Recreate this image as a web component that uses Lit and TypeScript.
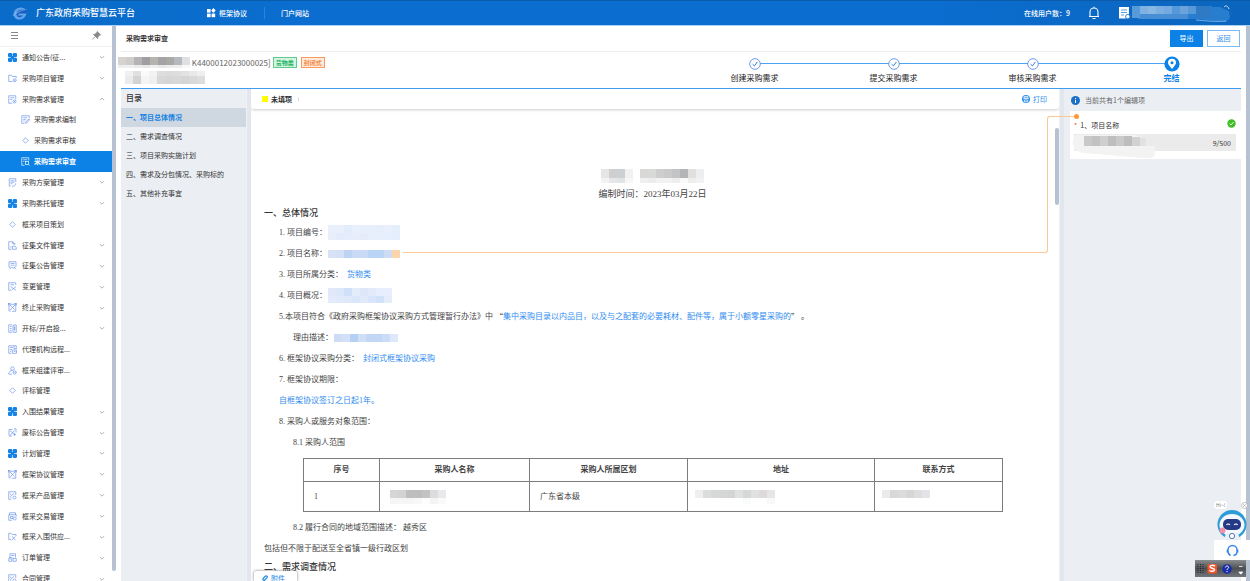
import { LitElement, html, svg, css, nothing } from "lit";
import { customElement, property, state } from "lit/decorators.js";
import { classMap } from "lit/directives/class-map.js";

type Fold = "down" | "up" | "none";
interface MenuItem {
  icon: string;
  text: string;
  fold: Fold;
  sub?: boolean;
}

const MENU: MenuItem[] = [
  { icon: "grid", text: "通知公告(征...", fold: "down" },
  { icon: "folder", text: "采购项目管理", fold: "down" },
  { icon: "doc", text: "采购需求管理", fold: "up" },
  { icon: "edit", text: "采购需求编制", fold: "none", sub: true },
  { icon: "diamond", text: "采购需求审核", fold: "none", sub: true },
  { icon: "search", text: "采购需求审查", fold: "none", sub: true },
  { icon: "plan", text: "采购方案管理", fold: "down" },
  { icon: "grid", text: "采购委托管理", fold: "down" },
  { icon: "diamond", text: "框采项目策划", fold: "none" },
  { icon: "file", text: "征集文件管理", fold: "down" },
  { icon: "notice", text: "征集公告管理", fold: "down" },
  { icon: "change", text: "变更管理", fold: "down" },
  { icon: "flow", text: "终止采购管理", fold: "down" },
  { icon: "open", text: "开标/开启投...", fold: "down" },
  { icon: "agency", text: "代理机构远程...", fold: "none" },
  { icon: "user", text: "框采组建评审...", fold: "none" },
  { icon: "diamond", text: "评标管理", fold: "none" },
  { icon: "grid", text: "入围结果管理", fold: "down" },
  { icon: "bid", text: "废标公告管理", fold: "down" },
  { icon: "grid", text: "计划管理", fold: "down" },
  { icon: "flow", text: "框架协议管理", fold: "down" },
  { icon: "product", text: "框采产品管理", fold: "down" },
  { icon: "trade", text: "框采交易管理", fold: "down" },
  { icon: "supply", text: "框采入围供应...", fold: "down" },
  { icon: "order", text: "订单管理", fold: "down" },
  { icon: "product", text: "合同管理", fold: "down" },
];

const TOC = [
  "一、项目总体情况",
  "二、需求调查情况",
  "三、项目采购实施计划",
  "四、需求及分包情况、采购标的",
  "五、其他补充事宜",
];

const STEPS = ["创建采购需求", "提交采购需求", "审核采购需求", "完结"];

const ICONS: Record<string, unknown> = {
  grid: svg`<g fill="#1583e6" stroke="none"><rect x="0" y="0" width="8.5" height="8.5" rx="2.500"/><rect x="9.5" y="0" width="8.5" height="8.5" rx="2.500"/><rect x="0" y="9.5" width="8.5" height="8.5" rx="2.500"/><rect x="9.5" y="9.5" width="8.5" height="8.5" rx="2.500"/><rect x="6" y="6" width="6" height="6"/></g>`,
  folder: svg`<path d="M9 15H1.500V2.500H7L9 5h7.500v3"/><circle cx="13.500" cy="12.500" r="3"/><circle cx="13.500" cy="12.500" r=".6"/>`,
  doc: svg`<path d="M8 16.500H1.500v-15h14V9M4.500 5.500h8M4.500 9h4"/><circle cx="13" cy="13" r="3"/><path d="M13 12v2"/>`,
  edit: svg`<path d="M7 16.500H1.500v-15h15V6M4.500 5.500h8M4.500 9h5M4.500 12h3M9 16.500l1-3.500 6-5 1.500 2-6 5.500z"/>`,
  diamond: svg`<path d="M9 3.500L14.500 9 9 14.500 3.500 9z"/>`,
  search: svg`<path d="M7 16.500H1.500v-15h14V7M4.500 5.500h8M4.500 9h2"/><rect x="9" y="9" width="6" height="6"/><path d="M15 15l2.500 2"/>`,
  plan: svg`<path d="M5 16.500H2.500v-15h13V8M5 5.500h8M5 8.500h8M5 11.500h4M8 16.500c5 0 7-1 7.500-6"/>`,
  file: svg`<path d="M7 16.500H1.500v-15h8l4 4V8M9.500 1.500v4h4M4 12h3"/><path d="M9 16.500v-6h5l2.500 2v4z"/>`,
  notice: svg`<path d="M5 12.500H2v-11h14v10M5 5h8M5 8.500h8M3 16.500l4-4 3 2 5-3M12 12l4 4.500"/>`,
  change: svg`<path d="M6 16.500H1.500v-15h14V6M5 5.500h7M5 9l11 7.500M16 9L7 16.500"/>`,
  flow: svg`<path d="M2 16V5M5 2.500h8M15.500 5v11M2 16h3M4 4l9 9M14 4L4 14M8 16.500h8"/><rect x="1" y="1" width="3" height="3"/><rect x="14" y="1" width="3" height="3"/>`,
  open: svg`<path d="M8 16.500H1.500v-15H8M4 5h3M4 9h3M4 13h3M10 2h6.500v14.500H10zM11 6h4M11 10h4M13 6v7"/>`,
  agency: svg`<path d="M7 16.500H1.500v-15h15V8M4 5h6M4 9h4M4 12.500h3M12 1.500v6h4.500"/><rect x="9.500" y="10" width="7.500" height="6.500"/><path d="M12 13h3"/>`,
  user: svg`<circle cx="9" cy="5" r="3.500"/><path d="M1 16.500c1-5 4-8 8-8M2 16.500h6"/><circle cx="13.500" cy="13" r="3.200"/><path d="M12 13l1.200 1.200 2-2.200"/>`,
  bid: svg`<path d="M2 15V3M2 3h7M12 1.500h4V9M4 5.500l8 6M13 5L4 15M2 16h6M11 13h5M13 10v6"/>`,
  product: svg`<path d="M7 16.500H1.500v-15h14V8M4 5l3 4 5-4M4 12h3"/><circle cx="13" cy="13" r="3"/>`,
  trade: svg`<path d="M3 6V1.500h12V6M1.500 16.500V5.500h15V9M1.500 16.500H8M5 9h5v4H5z"/><circle cx="13.500" cy="13" r="3"/>`,
  supply: svg`<path d="M6 15H1.500V2.500H6l2 2.500h8v3M8 8.500l7 8M15 9l-8 7.500"/>`,
  order: svg`<path d="M4 9V1.500h11V9M6.500 5h6M1.500 16.500v-5h6v5zM10 9v7.500h6.500V11H10M1.500 9h6"/>`,
};

/* Redacted text: coarse colour cells on a regular raster. */
const mosaic = (rows: string[][], cw: number, rh: number[], label: string) => {
  const w = Math.max(...rows.map((r) => r.length)) * cw;
  const h = rh.reduce((a, b) => a + b, 0);
  let y = 0;
  const out = rows.map((row, i) => {
    const top = y;
    y += rh[i];
    return row.map((c, j) =>
      c ? svg`<rect x=${j * cw} y=${top} width=${cw} height=${rh[i]} fill=${"#" + c}></rect>` : nothing
    );
  });
  return html`<svg class="mosaic" role="img" aria-label=${label} width=${w} height=${h} viewBox="0 0 ${w} ${h}" shape-rendering="crispEdges">${out}</svg>`;
};

const chevron = (up: boolean) => html`<svg class="chev" viewBox="0 0 10 10" aria-hidden="true"><path d=${up ? "M1.500 7L5 3.500 8.500 7" : "M1.500 3.500L5 7l3.500-3.500"} fill="none" stroke="#a4a8ae" stroke-width="1.500"/></svg>`;

@customElement("side-menu")
class SideMenu extends LitElement {
  @state() current = "采购需求审查";

  static styles = css`
    :host { display: flex; flex: none; width: 116px; min-height: 0; background: #fff; overflow: hidden; }
    .inner { flex: 1; min-width: 0; display: flex; flex-direction: column; }
    .tools { flex: none; height: 21px; display: flex; justify-content: space-between; align-items: center; padding: 0 11px 2px 10px; border-bottom: 1px solid #eef0f2; box-sizing: border-box; }
    .tools button { border: 0; background: none; padding: 0; height: 9px; display: flex; }
    .tools svg { width: 9px; height: 9px; }
    ul { list-style: none; margin: 0 0 -8px; padding: 0; flex: 1; display: grid; grid-auto-rows: 1fr; }
    li { display: flex; min-height: 0; }
    .item { flex: 1; min-width: 0; display: flex; align-items: center; gap: 5px; padding: 0 7px 0 8px; border: 0; background: none; color: #333; text-decoration: none; font: 7px/9px "Noto Sans CJK SC", sans-serif; text-align: left; white-space: nowrap; }
    .item span { flex: 1; }
    .sub { padding-left: 21px; gap: 4px; }
    .on { background: #0c82e6; color: #fff; font-weight: 700; }
    .ico { width: 9px; height: 9px; flex: none; fill: none; stroke: #6f95ec; stroke-width: 1.4; }
    .on .ico { stroke: #fff; }
    .chev { width: 6px; height: 6px; flex: none; }
    .bar { flex: none; width: 4px; margin-bottom: 10px; background: #b6c1d1; border-radius: 0 0 2px 2px; }
  `;

  render() {
    return html`
      <div class="inner">
        <div class="tools">
          <button aria-label="折叠菜单"><svg viewBox="0 0 9 9"><path d="M1 1.500h7M1 4.500h7M1 7.500h7" stroke="#888" stroke-width="1.200"/></svg></button>
          <button aria-label="固定菜单"><svg viewBox="0 0 9 9"><path d="M5.200.5l3.300 3.300-1 .5-1.500 1.500-.4 1.800L1.500 3.500l1.800-.4L4.800 1.500zM3 5.500L.5 8.500" fill="#8a8a8a" stroke="#8a8a8a" stroke-width=".8"/></svg></button>
        </div>
        <ul>
          ${MENU.map((m) => {
            const on = m.text === this.current;
            const cls = classMap({ item: true, sub: !!m.sub, on });
            const ico = html`<svg class="ico" viewBox="0 0 18 18" aria-hidden="true">${ICONS[m.icon]}</svg>`;
            return html`<li>${m.fold === "none"
              ? html`<a class=${cls} href="#" @click=${() => (this.current = m.text)}>${ico}<span>${m.text}</span></a>`
              : html`<button class=${cls} aria-expanded=${m.fold === "up"}>${ico}<span>${m.text}</span>${chevron(m.fold === "up")}</button>`}</li>`;
          })}
        </ul>
      </div>
      <div class="bar"></div>
    `;
  }
}

@customElement("step-line")
class StepLine extends LitElement {
  @property({ type: Array }) steps: string[] = [];

  static styles = css`
    :host { display: block; }
    ol { list-style: none; margin: 0; padding: 3px 0 0; display: grid; grid-template-columns: repeat(4, 139px); }
    li { position: relative; display: flex; flex-direction: column; align-items: center; font-size: 8px; line-height: 12px; color: #222; }
    .mark { height: 17px; display: flex; align-items: center; position: relative; }
    .mark svg { width: 12px; height: 12px; }
    .last .mark svg { width: 16px; height: 16px; }
    li:not(.last)::before { content: ""; position: absolute; top: 8px; left: 50%; width: 100%; height: 1px; background: #4aa3f3; }
    .last { color: #0c82e6; font-weight: 700; }
  `;

  render() {
    const n = this.steps.length - 1;
    return html`<ol>${this.steps.map((s, i) => html`
      <li class=${i === n ? "last" : ""}>
        <span class="mark">${i === n
          ? html`<svg viewBox="0 0 16 16"><circle cx="8" cy="8" r="7.600" fill="#0c82e6"/><path d="M8 13C5.500 10 4 8.500 4 6.800a4 4 0 018 0C12 8.500 10.500 10 8 13z" fill="#fff"/><circle cx="8" cy="6.800" r="1.500" fill="#0c82e6"/></svg>`
          : html`<svg viewBox="0 0 12 12"><circle cx="6" cy="6" r="5.300" fill="#fff" stroke="#5b8fe8" stroke-width=".9"/><path d="M3.600 6.200l1.800 1.700 3-4" fill="none" stroke="#3a78e0" stroke-width="1"/></svg>`}</span>
        <span>${s}</span>
      </li>`)}</ol>`;
  }
}

@customElement("requirement-doc")
class RequirementDoc extends LitElement {
  static styles = css`
    :host { display: block; color: #444; font: 8px/21px "Liberation Serif", "Noto Sans CJK SC", serif; }
    p, h2, h3 { margin: 0; }
    .mosaic { display: block; flex: none; }
    .title { display: flex; justify-content: center; gap: 7px; padding: 60px 6px 0 0; height: 14px; }
    .date { text-align: center; font-size: 9px; line-height: 22px; padding-right: 5px; }
    h3 { font-size: 9px; line-height: 17px; font-weight: 500; color: #333; padding-left: 13px; }
    .row { display: flex; align-items: center; height: 21px; padding-left: 28px; white-space: nowrap; }
    .deep { padding-left: 42px; }
    .flush { padding-left: 13px; }
    .blue { color: #2f8cf0; }
    .cjk { font-family: "Noto Sans CJK SC", sans-serif; }
    .gap { gap: 1px; }
    table { border-collapse: collapse; table-layout: fixed; width: calc(100% - 108px); margin: 5px 0 5px 52px; line-height: 12px; }
    th, td { border: 1px solid #7c7c7c; padding: 0 10px; box-sizing: border-box; text-align: left; }
    td:nth-child(4), td:nth-child(5) { padding-left: 7px; }
    th { height: 23px; text-align: center; font-weight: 600; color: #444; }
    td { height: 30px; }
    .w1 { width: 76px; } .w2 { width: 150px; } .w3 { width: 158px; } .w4 { width: 187px; }
  `;

  render() {
    return html`
      <div class="title">
        ${mosaic([["e6e6e6", "cfcfcf", "cdd0d2", "f1f1f1"], ["f3f3f3", "e6e6e6", "e2e3e4", "f6f6f6"]], 8, [9, 5], "已隐去")}
        ${mosaic([["dad7d7", "d8dad8", "cecece", "cacaca", "c3c4c6", "b5b5b6", "e2e0de", "eceeef"], ["efefef", "ededed", "f2f2f2", "f3f3f3", "eeeeee", "fafafa", "eeeeec", "f2f2f2"]], 8, [9, 5], "已隐去")}
      </div>
      <p class="date">编制时间：2023年03月22日</p>
      <h3>一、总体情况</h3>
      <p class="row gap">1. 项目编号：${mosaic([["e9effb", "e9effb", "e3ecfa", "e8f0fb", "e8effc", "e8eefb", "e6eefb", "e9f0fc", "e5effc"], ["e8effb", "e2ecfa", "e6eefb", "e7eefa", "e4ecfa", "e7effb", "e7eefc", "e6effc", "e3edfb"]], 8, [8, 7], "已隐去")}</p>
      <p class="row gap">2. 项目名称：${mosaic([["d8e2f6", "d3e0f5", "bcd3f4", "c8daf5", "c8daf5", "b9d4f5", "b8d4f6", "cddcf4", "fcd4ab"]], 8, [8], "已隐去")}</p>
      <p class="row">3. 项目所属分类：<span class="blue">&nbsp; 货物类</span></p>
      <p class="row gap">4. 项目概况：${mosaic([["e0e8f9", "dce7f9", "cfe0f8", "e3ecfb", "dce8fa", "e2ebfa", "e8effc", "e8eefb"], ["e4ecfb", "e0eafa", "dfe9fa", "dae6f9", "e0eafa", "d8e5fa", "d2e2f8", "e5edfb"]], 8, [8, 7], "已隐去")}</p>
      <p class="row">5.本项目符合《政府采购框架协议采购方式管理暂行办法》中&nbsp;<span class="cjk">“</span><span class="blue">集中采购目录以内品目，以及与之配套的必要耗材、配件等，属于小额零星采购的</span><span class="cjk">”</span>&nbsp;。</p>
      <p class="row deep gap">理由描述：${mosaic([["cfdcf5", "d3e0f7", "b4d0f5", "cfdff6", "c2d7f5", "c2d7f5", "cbdcf6", "dde8fa"]], 8, [8], "已隐去")}</p>
      <p class="row">6. 框架协议采购分类：<span class="blue">&nbsp; 封闭式框架协议采购</span></p>
      <p class="row">7. 框架协议期限：</p>
      <p class="row blue">自框架协议签订之日起1年。</p>
      <p class="row">8. 采购人或服务对象范围：</p>
      <p class="row deep">8.1 采购人范围</p>
      <table>
        <colgroup><col class="w1"><col class="w2"><col class="w3"><col class="w4"><col></colgroup>
        <thead><tr><th>序号</th><th>采购人名称</th><th>采购人所属区划</th><th>地址</th><th>联系方式</th></tr></thead>
        <tbody><tr>
          <td>1</td>
          <td>${mosaic([["d6d6d6", "d3d3d3", "bebebe", "bebebe", "c3c3c3", "dcdce0", "e9e9eb"], ["f6f6f6", "f6f6f6", "f6f6f6", "f8f8f8", "fdfdfd", "f4f4f4", "f9f9f9"]], 8, [8, 6], "已隐去")}</td>
          <td>广东省本级</td>
          <td>${mosaic([["efefef", "dadedc", "d7d9d8", "d5d7d6", "d3d5d4", "e0e1e1", "d4d8d6", "e0e1e0", "dedadb", "e6e6e8"], ["", "", "", "", "", "", "fafcfc", "", "", "f7f9f9"]], 8, [8, 6], "已隐去")}</td>
          <td>${mosaic([["ebebeb", "d8d8d8", "dbdbdb", "d6d6d6", "dedede", "e4e4e8"], ["", "", "", "", "", ""]], 8, [8, 6], "已隐去")}</td>
        </tr></tbody>
      </table>
      <p class="row deep">8.2 履行合同的地域范围描述：&nbsp;越秀区</p>
      <p class="row flush">包括但不限于配送至全省镇一级行政区划</p>
      <h3>二、需求调查情况</h3>
    `;
  }
}

@customElement("app-root")
class AppRoot extends LitElement {
  @state() section = 0;

  static styles = css`
    :host { display: flex; flex-direction: column; height: 100vh; overflow: hidden; background: #fff; color: #333; font: 7px/12px "Noto Sans CJK SC", sans-serif; position: relative; }
    a { color: inherit; text-decoration: none; }
    button { font: inherit; }
    .mosaic { display: block; }
    .top { flex: none; height: 26px; box-sizing: border-box; display: flex; align-items: center; color: #fff; background: linear-gradient(90deg, #0a6cc8, #0b6dcf 25%, #0b6dcf 75%, #0b65bd); border-top: 1px solid #0b5ba8; border-bottom: 1px solid #a9cff3; padding: 0 20px 0 12px; }
    .logo { width: 17px; height: 15px; margin-right: 7px; }
    h1 { margin: 0; width: 170px; font-size: 9px; line-height: 14px; font-weight: 500; }
    .nav { display: flex; align-items: center; flex: 1; }
    .nav a { display: flex; align-items: center; gap: 3px; font-weight: 500; }
    .nav svg { width: 10px; height: 10px; }
    .sep { width: 1px; height: 12px; background: #2b83dc; margin: 0 16px 0 17px; }
    .online { font-weight: 500; margin-right: 17px; }
    .bell { width: 14px; height: 14px; margin-right: 17px; }
    .note { width: 13px; height: 14px; margin-right: 1px; }
    .who { display: flex; width: 98px; opacity: 0.8; }
    .body { flex: 1; min-height: 0; display: flex; }
    main { flex: 1; min-width: 0; margin: 0 5px; display: flex; flex-direction: column; }
    .pagebar { flex: none; height: 26px; box-sizing: border-box; display: flex; align-items: center; gap: 4px; padding: 0 1px 1px 5px; border-bottom: 1px solid #ececec; }
    h2 { margin: 0; flex: 1; font-size: 7px; line-height: 12px; font-weight: 600; }
    .btn { width: 33px; height: 17px; padding: 0; border: 1px solid #0c82e6; background: #0c82e6; color: #fff; font-size: 7px; line-height: 12px; }
    .ghost { background: #fff; color: #2f8cea; border-color: #7cbcf6; }
    .info { flex: none; height: 37px; box-sizing: border-box; display: flex; justify-content: space-between; border-bottom: 1px solid #3e9df3; background: #fff; }
    .proj { padding-top: 4px; margin-left: -3px; }
    .line { display: flex; align-items: center; height: 13px; font-size: 8px; color: #666; }
    .tag { font-size: 6px; line-height: 9px; font-weight: 700; padding: 0 2px; border: 1px solid; margin-left: 2px; }
    .green { color: #28b765; border-color: #62c98e; background: #d5f5e2; }
    .orange { color: #f58a44; border-color: #f79a5c; background: #fdebdd; margin-left: 4px; }
    .second { padding: 2px 0 0 7px; }
    .work { flex: 1; min-height: 0; display: flex; position: relative; }
    .toc { flex: none; width: 125px; background: #ebeff3; }
    .toc h3 { margin: 0; padding-left: 5px; font-size: 8px; line-height: 18px; height: 19px; font-weight: 500; }
    .toc a { display: block; padding-left: 5px; height: 19px; line-height: 18px; white-space: nowrap; }
    .toc .on { background: #cfd7e0; color: #1583e6; font-weight: 700; }
    .split { flex: none; width: 5px; background: #e1e7ed; border-left: 1px solid #eff2f5; box-sizing: border-box; }
    .doc { flex: 1; min-width: 0; overflow: hidden; position: relative; background: #fff; }
    .legend { height: 20px; display: flex; align-items: center; padding: 0 12px 0 11px; font-weight: 600; box-shadow: 0 1px 3px #ccc; border-radius: 0 0 3px 3px; }
    .dot { width: 6px; height: 6px; background: #ff0; margin-right: 3px; }
    .tick { width: 1px; height: 4px; background: #ddd; margin-left: 6px; }
    .print { margin-left: auto; padding: 0; border: 0; background: none; display: flex; align-items: center; gap: 3px; color: #1e88ea; font-weight: 400; }
    .print svg { width: 8px; height: 8px; }
    .thumb { position: absolute; right: 0; top: 39px; width: 4px; height: 77px; border-radius: 2px; background: #b6c1d1; }
    .attach { position: absolute; left: 3px; bottom: 0; width: 43px; height: 10px; padding: 3px 0 0 8px; border: 0; box-sizing: border-box; display: flex; align-items: center; gap: 3px; background: #fff; color: #1e88ea; font-size: 7px; box-shadow: 0 0 3px #777; border-radius: 2px 2px 0 0; overflow: hidden; }
    .attach svg { width: 6px; height: 6px; }
    .wire-a { position: absolute; left: 282px; right: 193px; top: 34px; height: 130px; border: solid #fbc995; border-width: 0 1px 1px 0; border-radius: 0 0 3px 0; box-sizing: border-box; }
    .wire-b { position: absolute; right: 165px; width: 29px; top: 27px; height: 8px; border: solid #fbc995; border-width: 1px 0 0 1px; border-radius: 3px 0 0 0; box-sizing: border-box; }
    .wire-dot { position: absolute; right: 162px; top: 25px; width: 5px; height: 5px; border-radius: 50%; background: #fb9a38; }
    .side { flex: none; width: 177px; background: #ebeff3; }
    .count { height: 22px; display: flex; align-items: center; gap: 5px; padding-left: 7px; color: #666; }
    .count svg { width: 9px; height: 9px; }
    .card { margin-left: 6px; background: #fff; height: 48px; padding: 7px 5px 0 4px; box-sizing: border-box; }
    .field { display: flex; align-items: center; height: 14px; }
    .field label { flex: 1; }
    .star { color: #f44; margin-right: 3px; }
    .ok { width: 9px; height: 9px; margin: -4px 0 0; }
    .box { position: relative; margin-top: 2px; height: 17px; display: flex; align-items: center; background: #ebebeb; padding-right: 5px; }
    .box input { flex: 1; min-width: 0; height: 17px; border: 0; padding: 0 4px; background: none; font: inherit; box-sizing: border-box; }
    .blob { position: absolute; left: -2px; top: 0; }
    .rail { flex: none; width: 4px; background: #b6c1d1; }
    .help { position: absolute; right: 0; bottom: 4px; width: 55px; display: flex; flex-direction: column; align-items: flex-end; }
    .bubble { display: flex; justify-content: space-between; align-items: center; width: 34px; height: 8px; margin-right: 2px; }
    .bubble span { background: #fff; color: #777; font-size: 5px; line-height: 8px; border-radius: 4px; padding: 0 2px; }
    .bubble svg { width: 7px; height: 7px; }
    .robot { width: 30px; height: 31px; margin-right: 3px; }
    .head { width: 36px; height: 20px; padding: 0 0 0 5px; border: 0; box-sizing: border-box; background: #fff; display: flex; align-items: center; justify-content: center; }
    .head svg { width: 13px; height: 13px; margin-right: 5px; }
    .ime { display: block; width: 51px; height: 17px; margin-right: 4px; }
  `;

  render() {
    return html`
      <header class="top">
        <svg class="logo" viewBox="0 0 34 30"><ellipse cx="16" cy="15" rx="13" ry="12" fill="#1c5fc0"/><path d="M28 8C24 1 11 1 6 8s-3 17 6 19c9 1 15-4 17-12H15l-4 4h11c-3 4-9 5-12 1-3-5 0-11 6-12 4-1 8 0 12 0z" fill="#5ea5ec"/><path d="M1 19c3-6 15-12 31-12-10 2-22 6-28 13z" fill="#8cc2f8" opacity=".5"/></svg>
        <h1>广东政府采购智慧云平台</h1>
        <nav class="nav">
          <a href="#"><svg viewBox="0 0 10 10" fill="#fff"><rect x="1" y="1" width="3.600" height="3.600"/><rect x="1" y="5.600" width="3.600" height="3.600"/><rect x="5.600" y="5.600" width="3.600" height="3.600"/><path d="M7.400 0l2.300 2.600-2.300 2.400-2.200-2.400z"/></svg>框架协议</a>
          <span class="sep"></span>
          <a href="#">门户网站</a>
        </nav>
        <span class="online">在线用户数：9</span>
        <svg class="bell" viewBox="0 0 14 14" fill="none" stroke="#fff" stroke-width="1.100"><path d="M2 10.500h10M3 10.500V6a4 4 0 018 0v4.500M5.500 12.500h3M7 .8v1.200"/></svg>
        <svg class="note" viewBox="0 0 13 14"><path d="M1 1h10v11.500H1z" fill="#fff"/><path d="M3 4h6M3 6.500h6M3 9h3" stroke="#5c9fe0"/><circle cx="9.800" cy="10.600" r="2.200" fill="#fff" stroke="#2f7fd0"/></svg>
        <div class="who">
          <svg width="98" height="18" viewBox="0 0 98 18" role="img" aria-label="用户信息已隐去">
            <path d="M4 3h84l9 4 1 7-4 4-30-3H6L0 10z" fill="#2f83d2"/>
            <g shape-rendering="crispEdges"><rect x="0" y="2" width="8" height="12" fill="#6ba7e0"/><rect x="8" y="2" width="8" height="8" fill="#9cc4ea"/><rect x="16" y="2" width="8" height="8" fill="#a9ccec"/><rect x="24" y="2" width="8" height="8" fill="#98c1e9"/><rect x="32" y="2" width="8" height="8" fill="#8dbbe7"/><rect x="40" y="2" width="8" height="8" fill="#69a5de"/><rect x="48" y="2" width="8" height="8" fill="#82b3e3"/><rect x="56" y="2" width="8" height="8" fill="#6aa5dd"/><rect x="64" y="2" width="16" height="12" fill="#377fc6"/><rect x="8" y="10" width="48" height="5" fill="#5698da"/></g>
            <path d="M64 16c12 1 20 2 30 1" stroke="#8cc0f0" fill="none"/><path d="M92 3c2-2 4-1 5 2" stroke="#fff" fill="none"/>
          </svg>
        </div>
      </header>
      <div class="body">
        <side-menu></side-menu>
        <main>
          <div class="pagebar">
            <h2>采购需求审查</h2>
            <button class="btn">导出</button>
            <button class="btn ghost">返回</button>
          </div>
          <div class="info">
            <div class="proj">
              <div class="line">
                ${mosaic([["d5d2d2", "cfcccc", "b5b3b4", "9f9fa1", "b6b4b1", "a5a3a3", "a9a9a8", "b6babf", "dfe0e2"], ["eeeeee", "f0f0f0", "ebebeb", "e8e8e8", "eeeeee", "e9e9e9", "ededed", "efefef", "f8f8f8"]], 8, [8, 3], "项目名称已隐去")}
                <span>&nbsp;K4400012023000025]</span>
                <span class="tag green">货物类</span>
                <span class="tag orange">封闭式</span>
              </div>
              <div class="second">${mosaic([["f0f0f0", "e0e0e0", "fafafa", "f2f2f2", "dedede", "dcdcdc", "dddddd", "e2e2e2", "e8e8e8", "efefef"], ["ebebeb", "d3d3d3", "f5f5f5", "f0f0f0", "d8d8d8", "d6d6d6", "d8d8d8", "d5d5d5", "d9d9d9", "dddddd"]], 8, [5, 8], "采购单位已隐去")}</div>
            </div>
            <step-line .steps=${STEPS}></step-line>
          </div>
          <div class="work">
            <nav class="toc">
              <h3>目录</h3>
              ${TOC.map((t, i) => html`<a href="#" class=${classMap({ on: i === this.section })} @click=${() => (this.section = i)}>${t}</a>`)}
            </nav>
            <div class="split"></div>
            <section class="doc">
              <div class="legend">
                <span class="dot"></span>未填项<span class="tick"></span>
                <button class="print"><svg viewBox="0 0 8 8"><circle cx="4" cy="4" r="4" fill="#2b8fe8"/><path d="M2 3h4V1.500H2zM1.300 3.500h5.400M2.300 5h3.400v1.700H2.300z" fill="none" stroke="#fff" stroke-width=".7"/></svg>打印</button>
              </div>
              <requirement-doc></requirement-doc>
              <div class="thumb"></div>
              <button class="attach"><svg viewBox="0 0 6 6"><path d="M1 3.500L3.500 1a1.200 1.200 0 011.600 1.700L2.700 5A1 1 0 011.200 3.600" fill="none" stroke="#1e88ea" stroke-width="1.200"/></svg>附件</button>
            </section>
            <div class="split"></div>
            <aside class="side">
              <div class="count"><svg viewBox="0 0 9 9"><circle cx="4.500" cy="4.500" r="4.500" fill="#1a70c6"/><path d="M4.500 2v1M4.500 3.800V7" stroke="#fff"/></svg>当前共有1个编辑项</div>
              <div class="card">
                <div class="field">
                  <label for="pname"><span class="star">*</span>1、项目名称</label>
                  <svg class="ok" viewBox="0 0 9 9"><circle cx="4.500" cy="4.500" r="4.200" fill="#43bf26"/><path d="M2.600 4.600l1.400 1.300 2.500-2.700" fill="none" stroke="#fff"/></svg>
                </div>
                <div class="box">
                  <input id="pname" type="text" readonly>
                  <svg class="blob" width="84" height="26" viewBox="0 0 84 26" aria-hidden="true"><path d="M4 1h60l10 5v6h9v7c0 5-6 6-12 5L12 19C0 18-2 6 4 1z" fill="#f3f3f3"/><g shape-rendering="crispEdges"><rect x="12" y="2" width="8" height="10" fill="#c9c9c9"/><rect x="20" y="2" width="8" height="10" fill="#c2c2c2"/><rect x="28" y="2" width="8" height="10" fill="#cfcfcf"/><rect x="36" y="2" width="8" height="10" fill="#bebebe"/><rect x="44" y="2" width="8" height="10" fill="#c8cac8"/><rect x="52" y="2" width="8" height="10" fill="#bdbdbd"/><rect x="60" y="3" width="8" height="9" fill="#d2d2d2"/><rect x="68" y="4" width="6" height="8" fill="#e2e2e2"/></g></svg>
                  <span>9/500</span>
                </div>
              </div>
            </aside>
            <div class="wire-a"></div><div class="wire-b"></div><div class="wire-dot"></div>
          </div>
        </main>
        <div class="rail"></div>
      </div>
      <div class="help">
        <div class="bubble"><span>Hi~!</span><svg viewBox="0 0 7 7"><circle cx="3.500" cy="3.500" r="3" fill="#fff" stroke="#aaa" stroke-width=".7"/><path d="M2.300 2.300l2.400 2.400M4.700 2.300L2.300 4.700" stroke="#999" stroke-width=".6"/></svg></div>
        <svg class="robot" viewBox="0 0 30 31"><circle cx="15" cy="15.500" r="14.500" fill="#2d9bd6"/><ellipse cx="15" cy="16" rx="12.500" ry="11" fill="#f4f8fc"/><rect x="6" y="10" width="18" height="11" rx="5" fill="#253a86"/><path d="M9.500 16c.8-1.400 2.600-1.400 3.400 0M17.200 16c.8-1.400 2.600-1.400 3.400 0" stroke="#fff" fill="none" stroke-width="1.100"/><path d="M9 24h12l2 7H7z" fill="#e9eff6"/><circle cx="15" cy="27" r="2.600" fill="#fff" stroke="#5b6fb0"/><circle cx="5.500" cy="21.500" r="3" fill="#f08fae"/></svg>
        <button class="head" aria-label="在线客服"><svg viewBox="0 0 13 13" fill="none" stroke="#3a86ea" stroke-width="1.500"><path d="M4.500 11.500A5 5 0 012 7V6a4.500 4.500 0 019 0v1.500c0 2-1 3.500-3.500 4M11.600 5.500v3M1.400 5.500v3"/></svg></button>
        <svg class="ime" viewBox="0 0 51 17" aria-hidden="true"><defs><linearGradient id="g" x1="0" y1="0" x2="0" y2="1"><stop offset="0" stop-color="#8a8d90"/><stop offset=".5" stop-color="#4d5053"/><stop offset="1" stop-color="#72757a"/></linearGradient></defs><rect width="51" height="17" fill="url(#g)"/><path d="M3 4v10M5.500 4v10M8 4v10" stroke="#222" stroke-dasharray="1 1"/><rect x="12.500" y="4" width="9.500" height="9.500" rx="1.500" fill="#f0552a"/><path d="M20 6c-2-1-5-1-5 .8s4.600 1 4.600 3-3.600 1.700-5.200.7" stroke="#fff" stroke-width="1.400" fill="none"/><circle cx="32" cy="9" r="4.800" fill="#1a2ea8"/><path d="M30.300 7.500c.3-2.200 3.600-1.800 3.300.2-.2 1-1.500 1-1.600 2.300M32 11v1.200" stroke="#fff" fill="none"/><path d="M44 6.500h3.500M43.800 12h4l-2 2.200z" stroke="#fff" fill="#fff" stroke-width=".8"/></svg>
      </div>
    `;
  }
}
